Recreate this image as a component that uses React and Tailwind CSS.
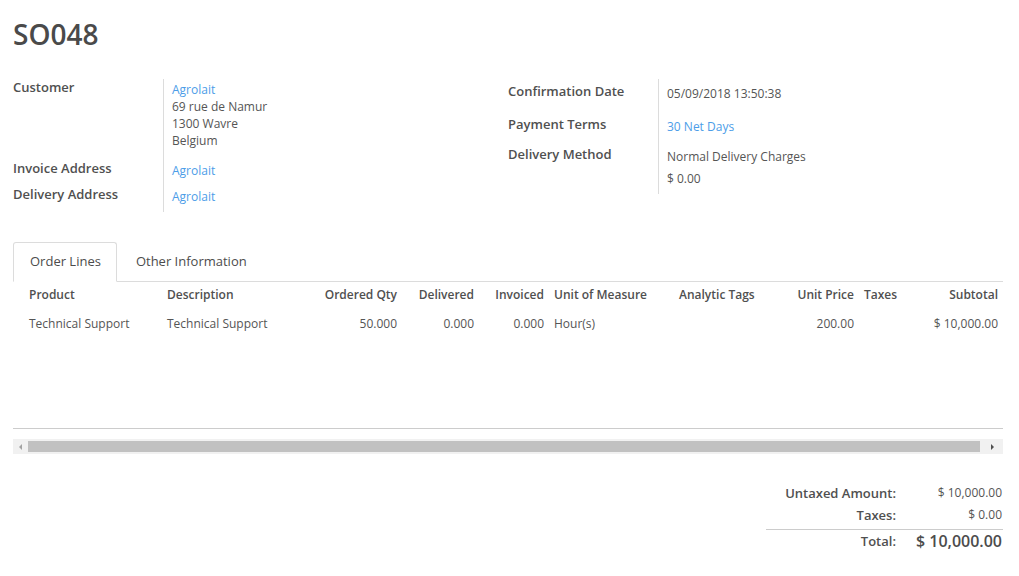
import React from "react";

const cols = [
  { h: "Product", v: "Technical Support", w: "w-[138px]", a: "text-left" },
  { h: "Description", v: "Technical Support", w: "w-[138px]", a: "text-left" },
  { h: "Ordered Qty", v: "50.000", w: "w-[102px]", a: "text-right" },
  { h: "Delivered", v: "0.000", w: "w-[77px]", a: "text-right" },
  { h: "Invoiced", v: "0.000", w: "w-[70px]", a: "text-right" },
  { h: "Unit of Measure", v: "Hour(s)", w: "w-[125px]", a: "text-left" },
  { h: "Analytic Tags", v: "", w: "w-[106px]", a: "text-left" },
  { h: "Unit Price", v: "200.00", w: "w-[79px]", a: "text-right" },
  { h: "Taxes", v: "", w: "w-[61px]", a: "text-left" },
  { h: "Subtotal", v: "$ 10,000.00", w: "w-[83px]", a: "text-right" },
];

function Link({ children }) {
  return <span className="text-[#4c9de8]">{children}</span>;
}

const LBL = "text-[13px] leading-[17px] font-semibold text-[#505050]";

export default function App() {
  return (
    <div className="min-h-[576px] bg-white font-['Open_Sans',sans-serif] text-[#4c4c4c] pl-[13px] pr-[16px]">
      <h1 className="pt-[17px] text-[28px] leading-[34px] font-semibold text-[#4a4a4a]">SO048</h1>

      <div className="mt-[28px] grid grid-cols-2">
        {/* left group */}
        <div className="grid grid-cols-[150px_1fr] content-start">
          <div className={`pt-[0px] ${LBL}`}>Customer</div>
          <div className="border-l border-[#dcdcdc] pl-[8px] pt-[2px] pb-[6px] text-[12px] leading-[17px] text-[#555]">
            <div><Link>Agrolait</Link></div>
            <div>69 rue de Namur</div>
            <div>1300 Wavre</div>
            <div>Belgium</div>
          </div>
          <div className={`pt-[5px] ${LBL}`}>Invoice Address</div>
          <div className="border-l border-[#dcdcdc] pl-[8px] pt-[7px] pb-[2px] text-[12px] leading-[17px]">
            <Link>Agrolait</Link>
          </div>
          <div className={`pt-[5px] ${LBL}`}>Delivery Address</div>
          <div className="border-l border-[#dcdcdc] pl-[8px] pt-[7px] pb-[7px] text-[12px] leading-[17px]">
            <Link>Agrolait</Link>
          </div>
        </div>

        {/* right group */}
        <div className="grid grid-cols-[150px_1fr] content-start">
          <div className={`pt-[4px] ${LBL}`}>Confirmation Date</div>
          <div className="border-l border-[#dcdcdc] pl-[8px] pt-[6px] pb-[8px] text-[12px] leading-[17px] text-[#555]">
            05/09/2018 13:50:38
          </div>
          <div className={`pt-[6px] ${LBL}`}>Payment Terms</div>
          <div className="border-l border-[#dcdcdc] pl-[8px] pt-[8px] pb-[7px] text-[12px] leading-[17px]">
            <Link>30 Net Days</Link>
          </div>
          <div className={`pt-[4px] ${LBL}`}>Delivery Method</div>
          <div className="border-l border-[#dcdcdc] pl-[8px] pt-[6px] pb-[7px] text-[12px] leading-[17px] text-[#555]">
            <div>Normal Delivery Charges</div>
            <div className="pt-[5px]">$ 0.00</div>
          </div>
        </div>
      </div>

      {/* tabs */}
      <div className="mt-[30px] flex border-b border-[#dcdcdc]">
        <div className="-mb-px h-[40px] flex items-center pl-[16px] pr-[15px] border border-[#dcdcdc] border-b-white rounded-t-[3px] bg-white text-[13px]">
          Order Lines
        </div>
        <div className="h-[39px] flex items-center pl-[19px] pr-[16px] text-[13px]">Other Information</div>
      </div>

      {/* table */}
      <div className="pl-[11px] pt-[1px]">
        <div className="flex h-[24px] items-center text-[12px] font-semibold text-[#505050]">
          {cols.map((c) => (
            <div key={c.h} className={`${c.w} ${c.a} shrink-0 px-[5px] whitespace-nowrap`}>{c.h}</div>
          ))}
        </div>
        <div className="flex h-[34px] items-center text-[12px] text-[#555]">
          {cols.map((c) => (
            <div key={c.h} className={`${c.w} ${c.a} shrink-0 px-[5px] whitespace-nowrap`}>{c.v}</div>
          ))}
        </div>
      </div>
      <div className="h-[88px] border-b border-[#cccccc]"></div>

      {/* scrollbar */}
      <div className="mt-[10px] h-[15px] bg-[#f1f1f1] flex items-center">
        <div className="w-[15px] h-full flex items-center justify-center">
          <svg width="6" height="8" viewBox="0 0 6 8"><path d="M4 1 L1 4 L4 7 Z" fill="#a3a3a3" /></svg>
        </div>
        <div className="flex-1 h-[11px] bg-[#c1c1c1]"></div>
        <div className="w-[23px] h-full flex items-center justify-center">
          <svg width="6" height="8" viewBox="0 0 6 8"><path d="M2 1 L5 4 L2 7 Z" fill="#505050" /></svg>
        </div>
      </div>

      {/* totals */}
      <div className="mt-[28px] flex justify-end">
        <div className="w-[237px]">
          <div className="flex h-[22px] items-center">
            <div className={`w-[130px] text-right ${LBL}`}>Untaxed Amount:</div>
            <div className="flex-1 text-right text-[12px] pr-[1px] text-[#555]">$ 10,000.00</div>
          </div>
          <div className="flex h-[22px] items-center">
            <div className={`w-[130px] text-right ${LBL}`}>Taxes:</div>
            <div className="flex-1 text-right text-[12px] pr-[1px] text-[#555]">$ 0.00</div>
          </div>
          <div className="mt-[3px] border-t border-[#cccccc] flex h-[23px] items-center">
            <div className={`w-[130px] text-right ${LBL}`}>Total:</div>
            <div className="flex-1 text-right text-[16px] font-semibold pr-[1px]">$ 10,000.00</div>
          </div>
        </div>
      </div>
    </div>
  );
}
